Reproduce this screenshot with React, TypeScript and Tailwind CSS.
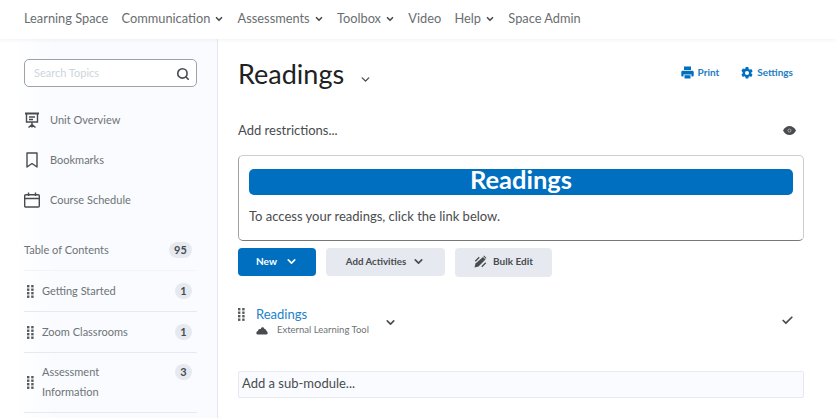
import { Check, ChevronDown, Search } from "lucide-react";
import { ReactNode } from "react";

const font = "font-['Lato','Noto_Sans',sans-serif]";

function NavChevron() {
  return <ChevronDown className="ml-[4px] h-[10px] w-[10px] text-[#494c4e]" strokeWidth={4} />;
}

function NavItem({ label, menu }: { label: string; menu?: boolean }) {
  return (
    <div className="flex items-center whitespace-nowrap">
      {label}
      {menu ? <NavChevron /> : null}
    </div>
  );
}

function Grip() {
  return (
    <svg width="7" height="13" viewBox="0 0 7 13" className="shrink-0 fill-[#565a5c]">
      {[0, 3.5, 7, 10.5].map((y) => (
        <g key={y}>
          <rect x="0" y={y} width="2.4" height="2.4" />
          <rect x="4.2" y={y} width="2.4" height="2.4" />
        </g>
      ))}
    </svg>
  );
}

function Count({ value, wide }: { value: number; wide?: boolean }) {
  return (
    <span
      className={`flex h-[16px] items-center justify-center rounded-full bg-[#e6eaf0] text-[11px] font-bold text-[#494c4e] ${
        wide ? "w-[23px]" : "w-[17px]"
      }`}
    >
      {value}
    </span>
  );
}

function SideLink({ icon, label }: { icon: ReactNode; label: string }) {
  return (
    <div className="flex h-[40px] items-center text-[11px] text-[#6e7376]">
      <div className="flex w-[26px] shrink-0 items-center">{icon}</div>
      {label}
    </div>
  );
}

function TocRow({ label, count }: { label: string; count: number }) {
  return (
    <div className="flex h-[41px] items-center border-b border-[#e6eaf0] pl-[3px] pr-[5px] text-[11px] text-[#6e7376]">
      <Grip />
      <span className="ml-[8px] flex-1">{label}</span>
      <Count value={count} />
    </div>
  );
}

export default function App() {
  return (
    <div className={`h-[418px] w-[836px] overflow-hidden bg-white ${font}`}>
      <nav className="relative z-10 flex h-[39px] items-center gap-[13.3px] pb-[2px] pl-[24px] text-[12.8px] text-[#6a6e70] shadow-[0_2px_3px_rgba(0,0,0,0.04)]">
        <NavItem label="Learning Space" />
        <NavItem label="Communication" menu />
        <NavItem label="Assessments" menu />
        <NavItem label="Toolbox" menu />
        <NavItem label="Video" />
        <NavItem label="Help" menu />
        <NavItem label="Space Admin" />
      </nav>

      <div className="flex h-[379px]">
        <aside className="w-[218px] shrink-0 border-r border-[#e6eaf0] bg-gradient-to-r from-white from-[6%] to-[#f9fbff] to-[25%] pl-[24px] pr-[20px] pt-[20px]">
          <div className="flex h-[28px] w-[173px] items-center justify-between rounded-[5px] border border-[#9ea2a6] bg-white pl-[9px] pr-[6px] pt-[1px] text-[11px] text-[#cdd5dc]">
            Search Topics
            <Search className="h-[14px] w-[14px] text-[#494c4e]" strokeWidth={2.8} />
          </div>

          <div className="mt-[13px]">
            <SideLink
              label="Unit Overview"
              icon={
                <svg width="16" height="16" viewBox="0 0 16 16" fill="none" stroke="#494c4e" strokeWidth="1.4">
                  <path d="M1 1.5h14" strokeWidth="2" />
                  <path d="M2.500 2v8h11V2" />
                  <path d="M5 5h6M5 7.500h4" />
                  <path d="M8 10v2.500M8 12.500 4.500 15.500M8 12.500l3.500 3M8 12.500v3" />
                </svg>
              }
            />
            <SideLink
              label="Bookmarks"
              icon={
                <svg width="16" height="16" viewBox="0 0 16 16" fill="none" stroke="#494c4e" strokeWidth="1.4">
                  <path d="M3 1h10v14l-5-3.500L3 15z" strokeLinejoin="round" />
                </svg>
              }
            />
            <SideLink
              label="Course Schedule"
              icon={
                <svg width="16" height="16" viewBox="0 0 16 16" fill="none" stroke="#494c4e" strokeWidth="1.4">
                  <rect x="0.700" y="2.700" width="14.600" height="12.300" rx="1" />
                  <path d="M1 6.500h14M4.500 0.500v3.500M11.500 0.500v3.500" />
                </svg>
              }
            />
          </div>

          <div className="mt-[10px] flex h-[41px] items-center justify-between border-b border-[#f1f4f8] pr-[5px] text-[11px] text-[#6e7376]">
            Table of Contents
            <Count value={95} wide />
          </div>
          <TocRow label="Getting Started" count={1} />
          <TocRow label="Zoom Classrooms" count={1} />
          <div className="flex h-[60px] items-center border-b border-[#e6eaf0] pl-[3px] pr-[5px] text-[11px] leading-[20px] text-[#6e7376]">
            <Grip />
            <span className="ml-[8px] mt-[-2px] flex-1">
              Assessment
              <br />
              Information
            </span>
            <div className="self-start pt-[11px]">
              <Count value={3} />
            </div>
          </div>
        </aside>

        <main className="flex-1 pl-[20px] pr-[32px]">
          <div className="flex h-[70px] items-center justify-between pb-[1px]">
            <div className="flex items-center">
              <h1 className="text-[27px] leading-none text-[#202122]">Readings</h1>
              <ChevronDown className="ml-[15px] mt-[12px] h-[13px] w-[13px] text-[#494c4e]" strokeWidth={2.5} />
            </div>
            <div className="mr-[11px] flex items-center pb-[2px] text-[10px] font-bold text-[#1c7cc4]">
              <svg width="13" height="13" viewBox="0 0 13 13" className="mr-[4px] fill-[#006fbf]">
                <path d="M3 0.500h7v3.500H3zM1.500 4.800h10c.6 0 1.200.6 1.200 1.200v3.500c0 .5-.4.9-.9.9H10.500V8.500h-8v1.900H1.200c-.5 0-.9-.4-.9-.9V6c0-.6.6-1.200 1.200-1.200z" />
                <path d="M3.500 9.200h6v3.300h-6z" />
              </svg>
              Print
              <svg width="14" height="14" viewBox="0 0 24 24" className="ml-[21px] mr-[3px] fill-[#006fbf]">
                <path d="M19.400 13a7.500 7.500 0 0 0 0-2l2.300-1.800-2.300-4-2.700 1.100a7.500 7.500 0 0 0-1.800-1L14.300 1.500H9.700L9.300 4.300a7.500 7.500 0 0 0-1.800 1L4.800 4.200l-2.300 4L4.600 11a7.500 7.500 0 0 0 0 2l-2.100 1.800 2.300 4 2.700-1.100c.5.400 1.100.7 1.800 1l.4 2.800h4.600l.4-2.800c.7-.3 1.300-.6 1.800-1l2.700 1.100 2.300-4zM12 15.500a3.500 3.500 0 1 1 0-7 3.500 3.500 0 0 1 0 7z" />
              </svg>
              Settings
            </div>
          </div>

          <div className="flex h-[44px] items-center justify-between pb-[1px] pr-[8px] text-[13px] text-[#494c4e]">
            Add restrictions...
            <svg width="13" height="9" viewBox="0 0 13 9">
              <path d="M0 4.500C1.500 1.500 4 0 6.500 0S11.500 1.500 13 4.500C11.500 7.500 9 9 6.500 9S1.500 7.500 0 4.500z" fill="#494c4e" />
              <circle cx="6.500" cy="4.500" r="2" fill="#9a9a9a" />
              <circle cx="6.500" cy="4.500" r="1" fill="#494c4e" />
            </svg>
          </div>

          <div className="mt-[2px] h-[86px] rounded-[5px] border border-t-[#cdcdcd] border-r-[#cdcdcd] border-b-[#787878] border-l-[#a0a0a0] px-[10px] pt-[13px]">
            <div className="flex h-[26px] items-center justify-center rounded-[5px] bg-[#006fbf] pb-[5px] text-[25.500px] font-bold leading-none text-white">
              Readings
            </div>
            <p className="mt-[11px] text-[13px] leading-[20px] text-[#494c4e]">To access your readings, click the link below.</p>
          </div>

          <div className="mt-[7px] flex items-start gap-[10px]">
            <button className="flex h-[28px] w-[78px] items-center justify-center rounded-[4px] bg-[#006fbf] pb-[2px] text-[10px] font-bold text-white">
              New
              <ChevronDown className="ml-[8px] h-[13px] w-[13px]" strokeWidth={3} />
            </button>
            <button className="flex h-[28px] w-[119px] items-center justify-center rounded-[4px] bg-[#e6eaf0] pb-[2px] text-[9.700px] font-bold text-[#494c4e]">
              Add Activities
              <ChevronDown className="ml-[6px] h-[13px] w-[13px]" strokeWidth={3} />
            </button>
            <button className="flex h-[29px] w-[97px] items-center justify-center rounded-[4px] bg-[#e6eaf0] pb-[2px] text-[10px] font-bold text-[#494c4e]">
              <svg width="13" height="13" viewBox="0 0 13 13" className="mr-[6px] fill-[#494c4e]">
                <path d="M9 2 11.500 4.500 4.500 11.500 0.500 12.500 1.500 8.500z" />
                <path d="M10 0.500 12.500 3 11.800 3.800 9.300 1.300z" />
                <path d="M0.800 5.800 4.800 1.800 5.700 2.700 1.700 6.700zM7.300 11.300 11.300 7.300 12.200 8.200 8.200 12.200z" />
              </svg>
              Bulk Edit
            </button>
          </div>

          <div className="mt-[28px] flex h-[46px] items-start">
            <div className="mt-[3px] w-[18px] shrink-0">
              <Grip />
            </div>
            <div className="w-[122px]">
              <div className="text-[13px] leading-[18px] text-[#1c82c9]">Readings</div>
              <div className="flex items-center text-[9.500px] leading-[14px] text-[#6e7376]">
                <svg width="12" height="9" viewBox="0 0 12 9" className="mr-[9px] fill-[#494c4e]">
                  <path d="M1.200 8.500C0 8.500 0 5 2 5 2 3 3.800 2.600 4.800 3.100 5 .8 8 .8 8.500 3 10 3 10.400 4.700 10.800 5.300 12.200 6.500 11.800 8.500 10.500 8.500z" />
                </svg>
                External Learning Tool
              </div>
            </div>
            <ChevronDown className="ml-[6px] mt-[11px] h-[13px] w-[13px] text-[#494c4e]" strokeWidth={3} />
            <Check className="ml-auto mr-[10px] mt-[9px] h-[13px] w-[13px] text-[#494c4e]" strokeWidth={3.2} />
          </div>

          <div className="mt-[20px] flex h-[27px] items-center rounded-[2px] border border-[#e6eaf0] bg-[#f9fbff] pb-[2px] pl-[3px] text-[13px] text-[#494c4e]">
            Add a sub-module...
          </div>
        </main>
      </div>
    </div>
  );
}
